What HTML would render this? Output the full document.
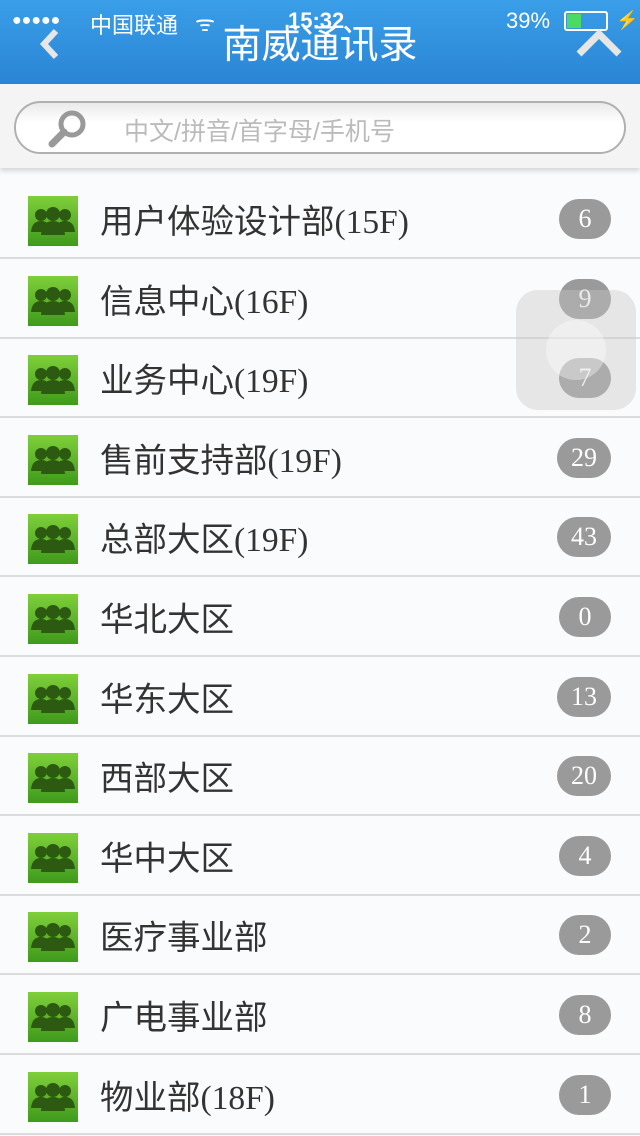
<!DOCTYPE html>
<html><head><meta charset="utf-8"><style>
*{margin:0;padding:0;box-sizing:border-box}
body{width:640px;height:1136px;overflow:hidden;background:#fafbfc;font-family:"Liberation Serif","Noto Sans CJK SC",serif;position:relative}
.hdr{position:absolute;left:0;top:0;width:640px;height:84px;background:linear-gradient(#3a9ee8,#2a85d5);color:#fff;font-family:"Liberation Sans","Noto Sans CJK SC",sans-serif}
.sb{position:absolute;top:8px;font-size:22px}
.title{position:absolute;left:0;width:640px;top:14px;text-align:center;font-size:39px}
.sa{position:absolute;top:84px;left:0;width:640px;height:84px;background:#f4f4f4;box-shadow:0 3px 5px rgba(0,0,0,.15)}
.pill{position:absolute;left:14px;top:17px;width:612px;height:53px;border:2px solid #b0b0b0;border-radius:27px;background:linear-gradient(#eaeaea,#fff 40%);font-family:"Liberation Sans","Noto Sans CJK SC",sans-serif;color:#bbb;font-size:25px;padding:9px 0 0 108px}
.row{position:absolute;left:0;width:640px;height:80px;border-bottom:2px solid #dcdcdc}
.ic{position:absolute;left:28px;top:17px;width:50px;height:50px;background:linear-gradient(#7fcf3a,#3f9a1c)}
.tx{position:absolute;left:100px;top:15px;font-size:33.5px;color:#333}
.bd{position:absolute;right:29px;top:20px;height:40px;min-width:52px;padding:0 14px;border-radius:20px;background:#9a9a9a;color:#fff;font-size:26px;text-align:center;line-height:40px}
.at{position:absolute;left:516px;top:290px;width:120px;height:120px;border-radius:22px;background:rgba(200,200,200,.4)}
</style></head><body>
<div class="hdr">
<div class="sb" style="left:12px;font-size:16px;top:12px">●●●●●</div>
<div class="sb" style="left:90px">中国联通</div>
<div class="sb" style="left:195px">ᯤ</div>
<div class="sb" style="left:288px;font-weight:bold">15:32</div>
<div class="sb" style="left:506px">39%</div>
<div style="position:absolute;left:564px;top:11px;width:44px;height:20px;border:2px solid #fff;border-radius:3px"><div style="width:14px;height:14px;margin:1px;background:#4cd964"></div></div>
<div class="sb" style="left:616px;font-size:18px;top:10px">⚡</div>
<svg style="position:absolute;left:38px;top:28px" width="24" height="32"><path d="M18 3 L6 16 L18 29" stroke="#e6e6e6" stroke-width="6" fill="none"/></svg>
<svg style="position:absolute;left:576px;top:28px" width="46" height="30"><path d="M3 26 L23 6 L43 26" stroke="#e6e6e6" stroke-width="7" fill="none"/></svg>
<div class="title">南威通讯录</div>
</div>
<div class="sa"><div class="pill">中文/拼音/首字母/手机号
<svg style="position:absolute;left:30px;top:5px" width="44" height="44"><circle cx="26" cy="16" r="11" stroke="#999" stroke-width="5" fill="none"/><path d="M18 24 L6 36" stroke="#999" stroke-width="7" stroke-linecap="round"/></svg></div></div>
<div id="list"></div>
<div class="at"><div style="position:absolute;left:30px;top:30px;width:60px;height:60px;border-radius:30px;background:rgba(255,255,255,.35)"></div></div>
<script>
const d=[["用户体验设计部(15F)",6],["信息中心(16F)",9],["业务中心(19F)",7],["售前支持部(19F)",29],["总部大区(19F)",43],["华北大区",0],["华东大区",13],["西部大区",20],["华中大区",4],["医疗事业部",2],["广电事业部",8],["物业部(18F)",1]];
const ic='<svg style="position:absolute;left:3px;top:9px" width="44" height="32"><g fill="#2c5a10"><circle cx="10" cy="10" r="6"/><circle cx="34" cy="10" r="6"/><path d="M0 27 Q1 16 10 16 Q19 16 20 27Z"/><path d="M24 27 Q25 16 34 16 Q43 16 44 27Z"/><circle cx="22" cy="9" r="7"/><path d="M10 30 Q11 16 22 16 Q33 16 34 30Z"/></g></svg>';
let h='';d.forEach((r,i)=>{h+=`<div class="row" style="top:${179+i*79.6}px"><div class="ic">${ic}</div><div class="tx">${r[0]}</div><div class="bd">${r[1]}</div></div>`});
document.getElementById('list').innerHTML=h;
</script>
</body></html>
